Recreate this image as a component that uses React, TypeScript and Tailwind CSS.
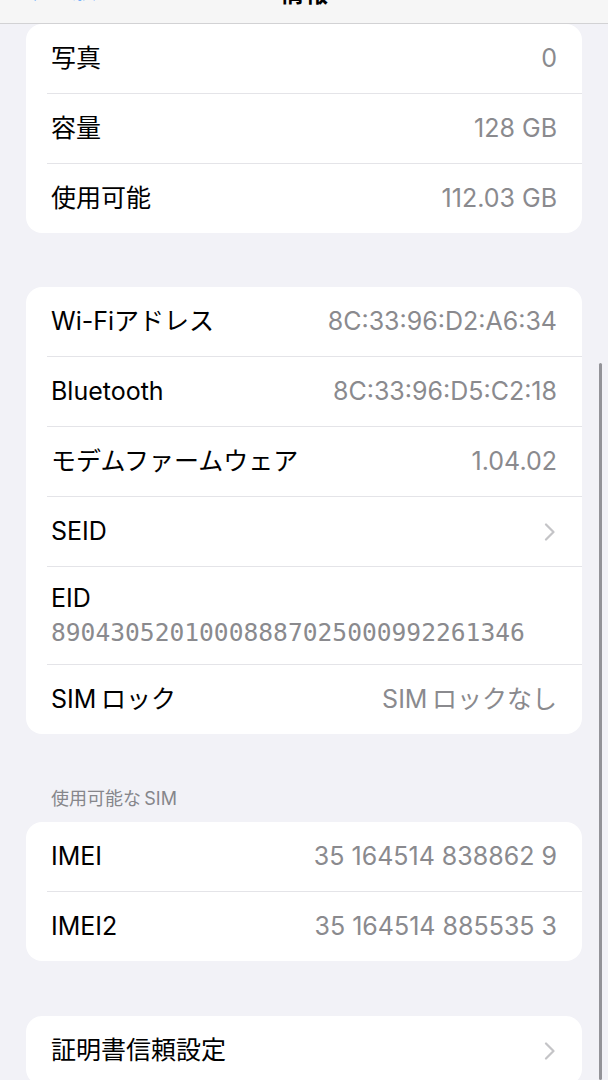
import { ChevronLeft } from 'lucide-react';

interface RowProps {
  label: string;
  value?: string;
  chevron?: boolean;
}

const font = { fontFamily: '"Inter", "Noto Sans CJK JP", sans-serif' };

const Divider = () => <div className="ml-[21px] h-px bg-[#e4e4e8]" />;

const Chevron = () => (
  <svg width="12" height="18" viewBox="0 0 12 18" fill="none" className="mr-[1px]">
    <path d="M2 1.5 L9.5 9 L2 16.5" stroke="#c4c4c7" strokeWidth="2.2" strokeLinecap="round" strokeLinejoin="round" />
  </svg>
);

const Row = ({ label, value, chevron }: RowProps) => (
  <div className="flex h-[69px] items-center justify-between pl-[25px] pr-[25px]">
    <span className="text-[25px] text-black">{label}</span>
    {value && <span className="text-[25px] text-[#8a8a8e]">{value}</span>}
    {chevron && <Chevron />}
  </div>
);

const Card = ({ children }: { children: React.ReactNode }) => (
  <div className="mx-[26px] overflow-hidden rounded-[16px] bg-white">{children}</div>
);

export default function App() {
  return (
    <div className="relative h-[1080px] w-[608px] overflow-hidden bg-[#f2f2f7]" style={font}>
      {/* Nav bar, scrolled mostly out of view */}
      <div className="relative z-10 flex h-[24px] items-end justify-center overflow-hidden border-b border-[#d2d2d4] bg-[#f6f6f6]">
        <div className="absolute bottom-[16px] left-[14px] flex items-center text-[#0a7aff]">
          <ChevronLeft className="h-[34px] w-[34px]" strokeWidth={2.6} />
          <span className="text-[24px] leading-none">一般</span>
        </div>
        <span className="mb-[17px] text-[24px] font-semibold leading-none text-black">情報</span>
      </div>

      <Card>
        <Row label="写真" value="0" />
        <Divider />
        <Row label="容量" value="128 GB" />
        <Divider />
        <Row label="使用可能" value="112.03 GB" />
      </Card>

      <div className="h-[54px]" />

      <Card>
        <Row label="Wi-Fiアドレス" value="8C:33:96:D2:A6:34" />
        <Divider />
        <Row label="Bluetooth" value="8C:33:96:D5:C2:18" />
        <Divider />
        <Row label="モデムファームウェア" value="1.04.02" />
        <Divider />
        <Row label="SEID" chevron />
        <Divider />
        <div className="flex h-[97px] flex-col justify-center pl-[25px]">
          <span className="text-[25px] leading-[30px] text-black">EID</span>
          <span
            className="mt-[5px] text-[24.6px] leading-[30px] tracking-[0px] text-[#8a8a8e]"
            style={{ fontFamily: '"DejaVu Sans Mono", monospace' }}
          >
            89043052010008887025000992261346
          </span>
        </div>
        <Divider />
        <Row label={'SIM\u2009ロック'} value={'SIM\u2009ロックなし'} />
      </Card>

      <div className="px-[51px] pb-[12px] pt-[54px] text-[18px] leading-[22px] text-[#86868b]">
        {'使用可能な\u2009SIM'}
      </div>

      <Card>
        <Row label="IMEI" value="35 164514 838862 9" />
        <Divider />
        <Row label="IMEI2" value="35 164514 885535 3" />
      </Card>

      <div className="h-[55px]" />

      <Card>
        <Row label="証明書信頼設定" chevron />
      </Card>

      {/* Scroll indicator */}
      <div className="absolute bottom-0 right-[6px] top-[363px] w-[3px] rounded-full bg-[#939398]" />
    </div>
  );
}
